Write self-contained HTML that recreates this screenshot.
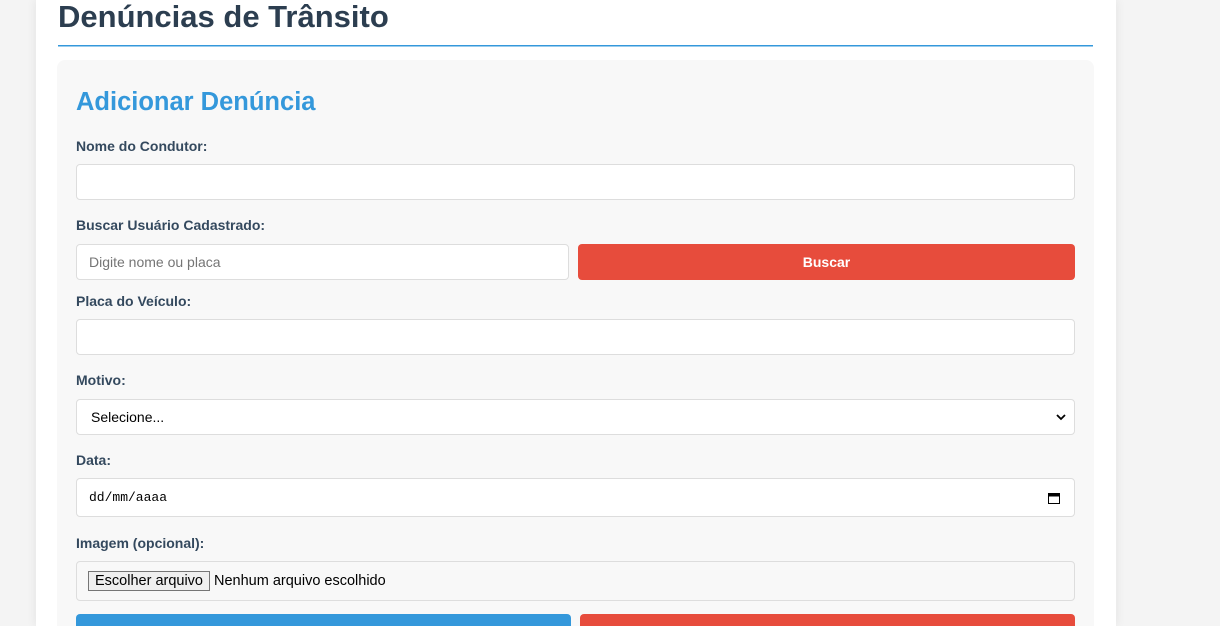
<!DOCTYPE html>
<html style="width:1220px;height:626px;overflow:hidden"><head><meta charset="utf-8"><style>
*{box-sizing:border-box;margin:0;padding:0}
body{width:1220px;height:626px;overflow:hidden;background:#f4f4f4;font-family:"Liberation Sans",sans-serif;position:relative}
.wrap{position:absolute;left:36px;top:0;width:1080px;height:626px;background:#fff;box-shadow:0 0 10px rgba(0,0,0,.08)}
.a{position:absolute}
h1{position:absolute;left:58px;top:-1px;font-size:31px;font-weight:bold;color:#2c3e50;white-space:nowrap}
.card{left:57px;top:60px;width:1037px;height:566px;background:#f8f8f8;border-radius:8px 8px 0 0}
h2{position:absolute;left:76px;top:88px;font-size:25.5px;font-weight:bold;color:#3498db}
.l{position:absolute;left:76px;font-size:14px;font-weight:bold;color:#34495e}
.in{position:absolute;left:76px;width:999px;height:36px;background:#fff;border:1px solid #ddd;border-radius:4px;font-size:14px;color:#000;padding-left:12px;display:flex;align-items:center}
.btn{position:absolute;border-radius:4px 4px 0 0;color:#fff;font-weight:bold;font-size:14px;display:flex;align-items:center;justify-content:center}
</style></head><body>
<div class="wrap"></div>
<h1>Denúncias de Trânsito</h1>
<svg class="a" style="left:58px;top:45px" width="1035" height="2"><rect x="0" y="0" width="1035" height="1.5" fill="#3498db"/></svg>
<div class="a card"></div>
<h2>Adicionar Denúncia</h2>
<div class="l" style="top:138px">Nome do Condutor:</div>
<div class="in" style="top:164px"></div>
<div class="l" style="top:217px">Buscar Usuário Cadastrado:</div>
<div class="in" style="top:244px;width:493px;color:#757575">Digite nome ou placa</div>
<div class="btn" style="left:578px;top:244px;width:497px;height:36px;background:#e74c3c;border-radius:4px">Buscar</div>
<div class="l" style="top:293px">Placa do Veículo:</div>
<div class="in" style="top:319px"></div>
<div class="l" style="top:372px">Motivo:</div>
<div class="in" style="top:399px;justify-content:space-between;padding-right:8px;padding-left:14px">Selecione...<svg width="10" height="8" viewBox="0 0 10 8"><path d="M1 2l4 4 4-4" stroke="#000" stroke-width="1.8" fill="none"/></svg></div>
<div class="l" style="top:452px">Data:</div>
<div class="in" style="top:478px;height:39px;font-family:'Liberation Mono',monospace;font-size:13px;justify-content:space-between;padding-right:14px">dd/mm/aaaa<svg width="12" height="12" viewBox="0 0 12 12"><rect x="0.5" y="1.5" width="11" height="10" fill="none" stroke="#000"/><rect x="0.5" y="1.5" width="11" height="3" fill="#000"/></svg></div>
<div class="l" style="top:535px">Imagem (opcional):</div>
<div class="in" style="top:561px;height:40px;background:#f8f8f8;font-size:14.5px;padding-left:11px"><span style="border:1px solid #767676;background:#efefef;padding:0 6px;height:20px;line-height:18px;margin-right:4px">Escolher arquivo</span>Nenhum arquivo escolhido</div>
<div class="btn" style="left:76px;top:614px;width:495px;height:12px;background:#3498db"></div>
<div class="btn" style="left:580px;top:614px;width:495px;height:12px;background:#e74c3c"></div>
</body></html>
